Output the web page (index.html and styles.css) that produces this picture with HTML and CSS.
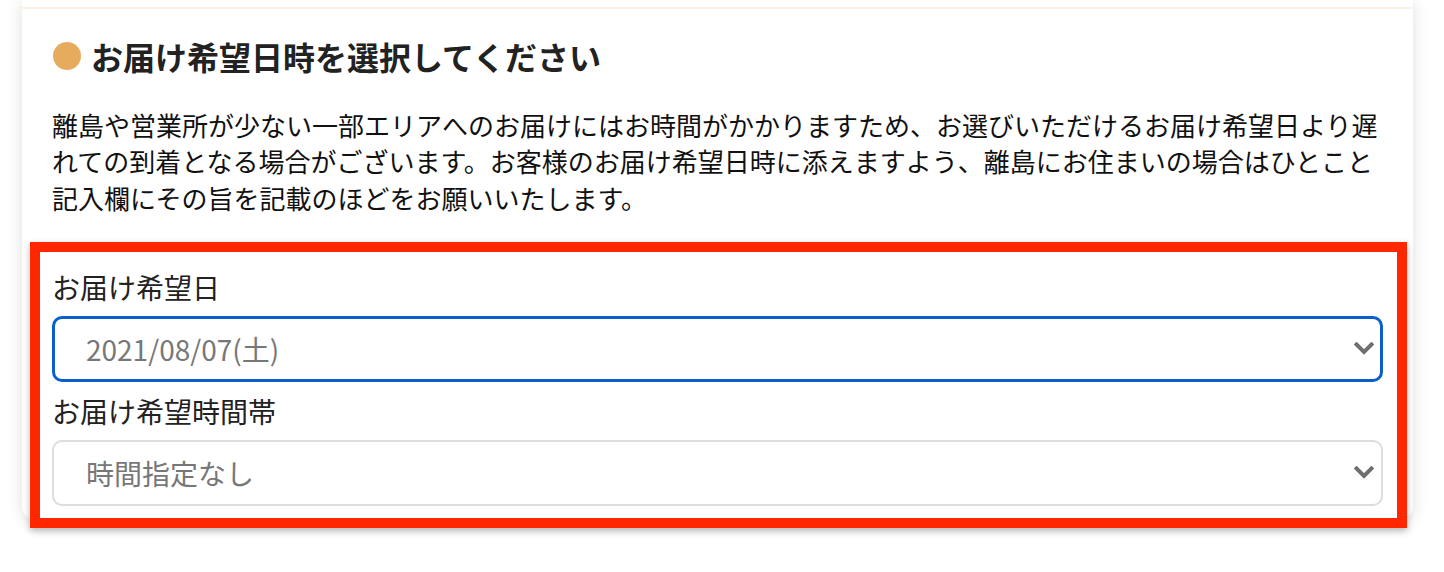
FILE: index.html
```html
<!DOCTYPE html>
<html lang="ja">
<head>
<meta charset="utf-8">
<title>お届け希望日時</title>
<link rel="stylesheet" href="styles.css">
</head>
<body>
<div class="page">
  <section class="card">
    <div class="card-top"></div>
    <h2 class="heading">お届け希望日時を選択してください</h2>
    <p class="lead">離島や営業所が少ない一部エリアへのお届けにはお時間がかかりますため、お選びいただけるお届け希望日より遅れての到着となる場合がございます。お客様のお届け希望日時に添えますよう、離島にお住まいの場合はひとこと記入欄にその旨を記載のほどをお願いいたします。</p>
    <div class="fields">
      <label class="field-label" for="date">お届け希望日</label>
      <div class="select-wrap">
        <select id="date" class="select select-focus">
          <option>2021/08/07(土)</option>
        </select>
        <svg class="chevron" width="20" height="13" viewBox="0 0 20 13" aria-hidden="true"><polyline points="2.5,2.5 10,10 17.5,2.5" fill="none" stroke="#6f6f6f" stroke-width="4" stroke-linecap="square" stroke-linejoin="miter"/></svg>
      </div>
      <label class="field-label" for="time">お届け希望時間帯</label>
      <div class="select-wrap">
        <select id="time" class="select">
          <option>時間指定なし</option>
        </select>
        <svg class="chevron" width="20" height="13" viewBox="0 0 20 13" aria-hidden="true"><polyline points="2.5,2.5 10,10 17.5,2.5" fill="none" stroke="#6f6f6f" stroke-width="4" stroke-linecap="square" stroke-linejoin="miter"/></svg>
      </div>
      <div class="highlight"></div>
    </div>
  </section>
</div>
</body>
</html>
```

FILE: styles.css
```css
* {
  box-sizing: border-box;
}

html, body {
  margin: 0;
  background: #ffffff;
}

body {
  font-family: "Noto Sans CJK JP", "Noto Sans", sans-serif;
  color: #1a1a1a;
  overflow: hidden;
}

.page {
  padding: 0 31px 40px 22px;
}

.card {
  background: #ffffff;
  border-radius: 0 0 12px 12px;
  box-shadow: 0 2px 16px rgba(0, 0, 0, 0.13);
  padding: 0 30px 13px 30px;
}

.card-top {
  height: 9px;
  margin: 0 -30px;
  border-bottom: 2px solid #fcefe4;
}

.heading {
  display: flex;
  align-items: center;
  gap: 10px;
  margin: 23px 0 0 0;
  font-size: 32px;
  line-height: 48px;
  font-weight: 700;
  color: #222222;
}

.heading::before {
  content: "";
  flex: 0 0 28px;
  width: 28px;
  height: 28px;
  margin-left: 1px;
  border-radius: 50%;
  background: #e7ab5e;
}

.lead {
  margin: 27px 0 0 0;
  font-size: 26px;
  line-height: 36.4px;
  color: #111111;
}

.fields {
  position: relative;
  margin-top: 42px;
}

.field-label {
  display: block;
  font-size: 28px;
  line-height: 58px;
  color: #222222;
}

.select-wrap {
  position: relative;
}

.select {
  display: block;
  width: 100%;
  height: 66px;
  margin: 0;
  padding: 0 60px 0 32px;
  appearance: none;
  -webkit-appearance: none;
  background: #ffffff;
  border: 2px solid #dddddd;
  border-radius: 10px;
  font-family: "Noto Sans CJK JP", "Noto Sans", sans-serif;
  font-size: 28px;
  color: #777777;
  outline: none;
}

.select-focus {
  border: 3px solid #0a5fcc;
  padding-left: 31px;
}

.chevron {
  position: absolute;
  right: 9px;
  top: 50%;
  margin-top: -7px;
  pointer-events: none;
}

.highlight {
  position: absolute;
  top: -16px;
  left: -22px;
  right: -24px;
  bottom: -22px;
  border: 10px solid #ff2700;
  box-shadow: 0 3px 7px rgba(0, 0, 0, 0.28);
  pointer-events: none;
}
```
